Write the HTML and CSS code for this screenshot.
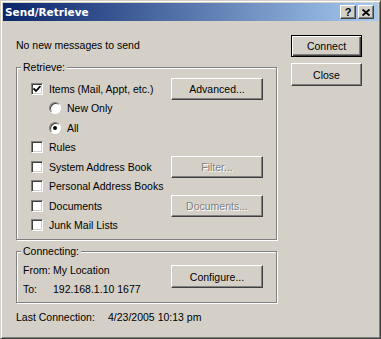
FILE: index.html
```html
<!DOCTYPE html>
<html lang="en">

<head>
    <meta charset="UTF-8">
    <meta name="viewport" content="width=device-width, initial-scale=1.0">
    <title>Send/Retrieve</title>
    <link rel="stylesheet" href="styles.css">
</head>

<body>
    <div class="window">
        <div class="titlebar">
            <span class="title">Send/Retrieve</span>
            <span class="tb-btn tb-help">?</span>
            <span class="tb-btn tb-close">
                <svg width="8" height="7" viewBox="0 0 8 7">
                    <path d="M0.5 0.5 L7.5 6.5 M7.5 0.5 L0.5 6.5" stroke="#000" stroke-width="1.8" fill="none" />
                </svg>
            </span>
        </div>

        <div class="dialog">
            <div class="main">
                <div class="status">No new messages to send</div>

                <fieldset class="group group-retrieve">
                    <legend>Retrieve:</legend>

                    <div class="row">
                        <span class="check checked">
                            <svg width="8" height="8" viewBox="0 0 8 8">
                                <path d="M0.5 3.5 L3 6 L7.5 1" stroke="#000" stroke-width="1.8" fill="none" />
                            </svg>
                        </span>
                        <span class="label">Items (Mail, Appt, etc.)</span>
                        <span class="btn">Advanced...</span>
                    </div>
                    <div class="row sub">
                        <span class="radio"></span>
                        <span class="label">New Only</span>
                    </div>
                    <div class="row sub">
                        <span class="radio selected"></span>
                        <span class="label">All</span>
                    </div>
                    <div class="row">
                        <span class="check"></span>
                        <span class="label">Rules</span>
                    </div>
                    <div class="row">
                        <span class="check"></span>
                        <span class="label">System Address Book</span>
                        <span class="btn disabled">Filter...</span>
                    </div>
                    <div class="row">
                        <span class="check"></span>
                        <span class="label">Personal Address Books</span>
                    </div>
                    <div class="row">
                        <span class="check"></span>
                        <span class="label">Documents</span>
                        <span class="btn disabled">Documents...</span>
                    </div>
                    <div class="row">
                        <span class="check"></span>
                        <span class="label">Junk Mail Lists</span>
                    </div>
                </fieldset>

                <fieldset class="group group-connect">
                    <legend>Connecting:</legend>
                    <div class="connect-info">
                        <span>From:</span><span>My Location</span>
                        <span>To:</span><span>192.168.1.10 1677</span>
                    </div>
                    <span class="btn btn-configure">Configure...</span>
                </fieldset>

                <div class="last">
                    <span class="last-label">Last Connection:</span>
                    <span>4/23/2005 10:13 pm</span>
                </div>
            </div>

            <div class="actions">
                <span class="btn btn-default">Connect</span>
                <span class="btn btn-close">Close</span>
            </div>
        </div>
    </div>
</body>

</html>
```

FILE: styles.css
```css
body {
    margin: 0;
    font-family: "Liberation Sans", Arial, sans-serif;
    font-size: 10.5px;
    color: #000;
}

.window {
    width: 381px;
    height: 339px;
    box-sizing: border-box;
    background: #d4d0c8;
    border: 1px solid;
    border-color: #d4d0c8 #404040 #404040 #d4d0c8;
    box-shadow: inset 1px 1px #fff, inset -1px -1px #808080;
    padding: 2px;
}

.titlebar {
    height: 18px;
    display: flex;
    align-items: center;
    padding: 0 4px 0 2px;
    background: linear-gradient(to right, #0a246a, #a6caf0);
}

.title {
    flex: 1;
    color: #fff;
    font-family: "DejaVu Sans", Verdana, sans-serif;
    font-weight: bold;
    font-size: 10.5px;
}

.tb-btn {
    width: 14px;
    height: 12px;
    display: flex;
    align-items: center;
    justify-content: center;
    background: #d4d0c8;
    border: 1px solid;
    border-color: #fff #404040 #404040 #fff;
    box-shadow: inset -1px -1px #808080;
    font-weight: bold;
    font-size: 11px;
    line-height: 1;
}

.tb-help {
    margin-right: 2px;
}

.dialog {
    display: flex;
    padding: 14px 0 0 13px;
}

.main {
    width: 261px;
}

.status {
    height: 21px;
    line-height: 21px;
}

.group {
    margin: 0;
    min-width: 0;
    border: 1px solid #808080;
    box-shadow: inset 1px 1px #fff, 1px 1px #fff;
}

.group legend {
    padding: 0 2px;
    margin-left: 4px;
    line-height: 13px;
    background: #d4d0c8;
}

.group-retrieve {
    margin-top: 5px;
    padding: 5px 13px 4px 0;
}

.row {
    height: 19.5px;
    display: flex;
    align-items: center;
    padding-left: 14px;
}

.row.sub {
    padding-left: 32px;
}

.row .btn {
    margin-left: auto;
}

.check {
    width: 12px;
    height: 12px;
    box-sizing: border-box;
    display: flex;
    align-items: center;
    justify-content: center;
    background: #fff;
    border: 1px solid;
    border-color: #808080 #fff #fff #808080;
    box-shadow: inset 1px 1px #404040, inset -1px -1px #d4d0c8;
}

.radio {
    width: 12px;
    height: 12px;
    box-sizing: border-box;
    display: flex;
    align-items: center;
    justify-content: center;
    border-radius: 50%;
    background: #fff;
    border: 1px solid;
    border-color: #808080 #fff #fff #808080;
    box-shadow: inset 1px 1px #404040;
}

.radio.selected::after {
    content: "";
    width: 4px;
    height: 4px;
    border-radius: 50%;
    background: #000;
}

.label {
    margin-left: 6px;
}

.btn {
    height: 22px;
    box-sizing: border-box;
    width: 92px;
    display: flex;
    align-items: center;
    justify-content: center;
    background: #d4d0c8;
    border: 1px solid;
    border-color: #fff #404040 #404040 #fff;
    box-shadow: inset -1px -1px #808080;
    flex-shrink: 0;
}

.btn.disabled {
    color: #808080;
    text-shadow: 1px 1px #fff;
}

.group-connect {
    margin-top: 5px;
    padding: 2px 13px 4px 0;
    display: flex;
}

.connect-info {
    display: grid;
    grid-template-columns: 30px auto;
    grid-auto-rows: 19px;
    align-items: center;
    padding-left: 6px;
}

.btn-configure {
    height: 23px;
    margin-left: auto;
    margin-top: 5px;
}

.last {
    display: flex;
    height: 19px;
    align-items: center;
    margin-top: 4px;
}

.last-label {
    width: 92px;
}

.actions {
    margin-left: 14px;
    width: 71px;
    display: flex;
    flex-direction: column;
    gap: 6px;
}

.actions .btn {
    width: 71px;
}

.btn-default {
    border-color: #000;
    box-shadow: inset 1px 1px #fff, inset -1px -1px #404040, inset -2px -2px #808080;
}

.btn-close {
    height: 23px;
}
```
